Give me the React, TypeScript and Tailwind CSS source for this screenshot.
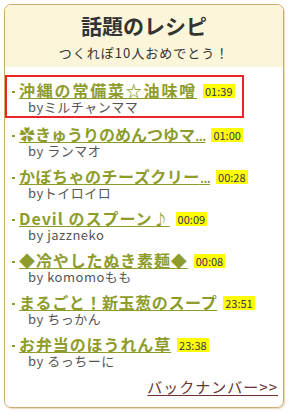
const recipes = [
  { title: "沖縄の常備菜☆油味噌", more: false, track: "tracking-[1.8px]", time: "01:39", by: "byミルチャンママ" },
  { title: "✿きゅうりのめんつゆマ", more: true, track: "tracking-[0px]", time: "01:00", by: "by ランマオ" },
  { title: "かぼちゃのチーズクリー", more: true, track: "tracking-[0.5px]", time: "00:28", by: "byトイロイロ" },
  { title: "Devil のスプーン♪", more: false, track: "tracking-[1px]", time: "00:09", by: "by jazzneko" },
  { title: "◆冷やしたぬき素麺◆", more: false, track: "tracking-[0.9px]", time: "00:08", by: "by komomoもも" },
  { title: "まるごと！新玉葱のスープ", more: false, track: "tracking-[0.6px]", time: "23:51", by: "by ちっかん" },
  { title: "お弁当のほうれん草", more: false, track: "tracking-[0.9px]", time: "23:38", by: "by るっちーに" },
]

const font = { fontFamily: '"MS PGothic", "Noto Sans CJK JP", "DejaVu Sans", sans-serif' }

const App = () => {
  return (
    <div className="w-[288px] h-[412px] bg-white p-[4px]" style={font}>
      <div className="h-[404px] border border-[#c8ab70] rounded-[7px] overflow-hidden shadow-[1px_1px_1px_#e6d9bb]">
        <div className="h-[62px] bg-[#fbf5da] flex flex-col items-center">
          <div className="mt-[8px] text-[21px] leading-[24px] font-bold text-[#333]">話題のレシピ</div>
          <div className="mt-[8px] text-[13px] leading-[16px] tracking-[1px] text-[#333]">つくれぽ10人おめでとう！</div>
        </div>
        <div className="pt-[8px]">
          {recipes.map((r, i) => (
            <div
              key={i}
              className={
                i === 0
                  ? "w-[239px] border-2 border-[#e8262a] pt-[4px] pb-[1px] mb-[7px]"
                  : "w-[239px] px-[2px] mb-[8px]"
              }
            >
              <div className="flex items-center h-[18px] pl-[5px]">
                <span className="shrink-0 w-[3px] h-[2px] bg-[#8e9c2c] mr-[4px] mt-[3px]" />
                <span className={`text-[16px] leading-[18px] font-bold ${r.track} text-[#8e9c2c] underline decoration-1 underline-offset-1 whitespace-nowrap`}>
                  {r.title}
                  {r.more && <span className="tracking-[-1px] font-normal">...</span>}
                </span>
                <span className="shrink-0 ml-[6px] bg-[#ffff00] text-[11px] leading-[14px] h-[14px] px-[2px] text-[#333355] mt-[2px]">
                  {r.time}
                </span>
              </div>
              <div className="h-[16px] pl-[21px] text-[13px] leading-[16px] tracking-[0.5px] text-[#555]">{r.by}</div>
            </div>
          ))}
        </div>
        <div className="flex justify-end pr-[5px] mt-[4px]">
          <span className="text-[15px] leading-[20px] tracking-[1px] text-[#6b3232] underline decoration-1 underline-offset-2">
            バックナンバー&gt;&gt;
          </span>
        </div>
      </div>
    </div>
  )
}

export default App
